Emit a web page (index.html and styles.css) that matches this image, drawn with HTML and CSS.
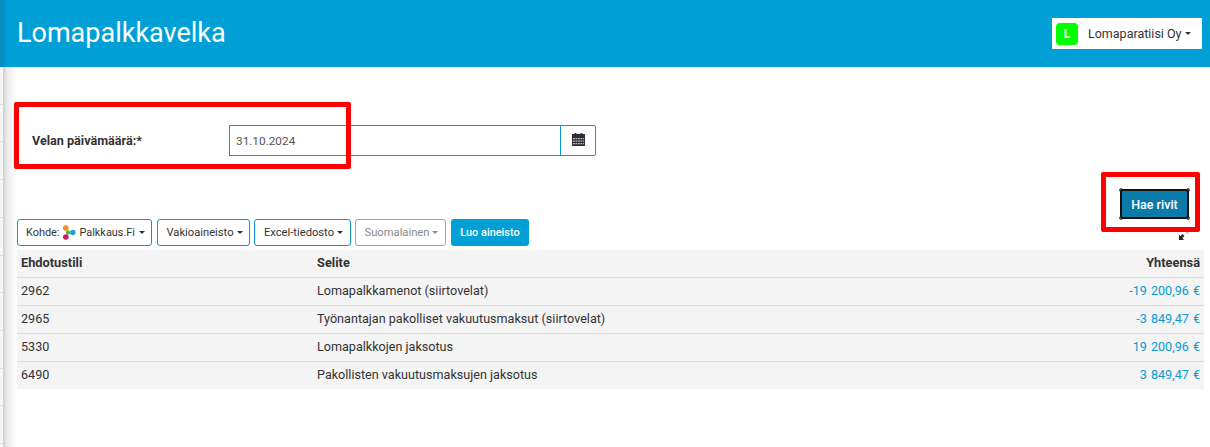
FILE: index.html
```html
<!DOCTYPE html>
<html lang="fi">
<head>
<meta charset="utf-8">
<title>Lomapalkkavelka</title>
<link rel="stylesheet" href="styles.css">
</head>
<body>
<div class="side-strip"></div>
<div class="side-shadow"></div>
<header class="topbar">
  <h1 class="title">Lomapalkkavelka</h1>
  <div class="company">
    <span class="company-badge">L</span>
    <span class="company-name">Lomaparatiisi Oy</span>
    <span class="caret caret-dark"></span>
  </div>
</header>
<main class="content">
  <div class="date-row">
    <label class="date-label">Velan päivämäärä:*</label>
    <div class="date-input">31.10.2024</div>
    <div class="date-btn">
      <svg width="13" height="13" viewBox="0 0 13 13"><path fill="#2f2f33" d="M0 1h2.500V0h2v1h4V0h2v1H13v13H0z"/><path fill="#b9bcc8" d="M1 5h1.800v1.300H1zM3.500 5h1.800v1.300H3.500zM6 5h1.800v1.300H6zM8.500 5h1.800v1.300H8.500zM11 5h1v1.300h-1zM1 7.500h1.800v1.300H1zM3.500 7.500h1.800v1.300H3.500zM6 7.500h1.800v1.300H6zM8.500 7.500h1.800v1.300H8.500zM11 7.500h1v1.300h-1zM1 10h1.800v1.300H1zM3.500 10h1.800v1.300H3.500zM6 10h1.800v1.300H6zM8.500 10h1.800v1.300H8.500zM11 10h1v1.300h-1z"/></svg>
    </div>
  </div>
  <div class="fetch-row">
    <div class="fetch-handles"><button class="fetch-btn">Hae rivit</button></div>
  </div>
  <div class="toolbar">
    <button class="tool w1">Kohde:
      <svg class="logo" width="14" height="15" viewBox="0 0 14 15"><circle cx="3.800" cy="3" r="2.800" fill="#f08c1e"/><circle cx="10.800" cy="7.500" r="2.700" fill="#1c9fd8"/><circle cx="6" cy="7.500" r="2.200" fill="#5cb531"/><circle cx="3.800" cy="12" r="2.800" fill="#c8186e"/></svg>
      Palkkaus.Fi<span class="caret"></span></button>
    <button class="tool w2">Vakioaineisto<span class="caret"></span></button>
    <button class="tool w3">Excel-tiedosto<span class="caret"></span></button>
    <button class="tool tool-off w4">Suomalainen<span class="caret"></span></button>
    <button class="tool-primary">Luo aineisto</button>
  </div>
  <div class="expand-row">
    <svg width="10" height="9" viewBox="0 0 10 9"><path fill="#2b2b2b" d="M0 9V3.500l1.500 1.500L3.500 3l2 2-2 2L5 9z"/><path fill="#999" d="M9.500 0v2.500L8.700 1.700 7.500 3 6.700 2.200 8 1 7.200 0z"/></svg>
  </div>
  <table class="grid">
    <thead>
      <tr><th class="c1">Ehdotustili</th><th class="c2">Selite</th><th class="num">Yhteensä</th></tr>
    </thead>
    <tbody>
      <tr><td>2962</td><td>Lomapalkkamenot (siirtovelat)</td><td class="num amount">-19 200,96 €</td></tr>
      <tr><td>2965</td><td>Työnantajan pakolliset vakuutusmaksut (siirtovelat)</td><td class="num amount">-3 849,47 €</td></tr>
      <tr><td>5330</td><td>Lomapalkkojen jaksotus</td><td class="num amount">19 200,96 €</td></tr>
      <tr><td>6490</td><td>Pakollisten vakuutusmaksujen jaksotus</td><td class="num amount">3 849,47 €</td></tr>
    </tbody>
  </table>
</main>
<div class="mark mark-date"></div>
<div class="mark mark-fetch"></div>
</body>
</html>
```
FILE: styles.css
```css
* { box-sizing: border-box; }
html, body { margin: 0; padding: 0; height: 100%; overflow: hidden; }
body { font-family: Roboto, "Liberation Sans", sans-serif; font-size: 13px; color: #333; background: #fff; }

.side-strip { position: absolute; left: 0; top: 67px; bottom: 0; width: 3px; background: repeating-linear-gradient(to bottom, #f6f6f6 0, #f6f6f6 36.7px, #dcdcdc 36.7px, #dcdcdc 37.7px); }
.side-shadow { position: absolute; left: 3px; top: 67px; bottom: 0; width: 14px; background: linear-gradient(to right, #cfcfcf, #ececec 30%, #fff); }

.topbar { height: 67px; background: linear-gradient(to right, #0a8cbe 0, #0a8cbe 3px, #009fd6 6px); display: flex; align-items: flex-start; justify-content: space-between; padding: 18px 8px 0 17px; }
.title { margin: 0; font-size: 27px; font-weight: 400; line-height: 30px; color: #fff; }
.company { width: 150px; height: 31px; background: #fff; display: flex; align-items: center; padding-left: 4px; font-size: 12.500px; color: #333; }
.company-badge { width: 22px; height: 22px; border-radius: 4px; background: #00ff00; color: #fff; font-weight: 700; font-size: 12px; display: flex; align-items: center; justify-content: center; margin-right: 10px; }
.caret { display: inline-block; width: 0; height: 0; margin-left: 3px; vertical-align: middle; border-top: 3px solid currentColor; border-left: 3px solid transparent; border-right: 3px solid transparent; }
.caret-dark { color: #333; }

.content { position: relative; padding: 58px 6px 0 17px; }

.date-row { display: flex; align-items: center; height: 31px; padding-left: 15px; }
.date-label { width: 197px; font-weight: 700; font-size: 12.600px; color: #333; }
.date-input { width: 332px; height: 31px; border: 1px solid #3a9358; display: flex; align-items: center; padding-left: 6px; font-size: 11.800px; color: #555; }
.date-btn { width: 36px; height: 31px; border: 1px solid #0a9ad2; border-radius: 0 2px 2px 0; display: flex; align-items: center; justify-content: center; margin-left: -1px; padding-bottom: 2px; }

.fetch-row { display: flex; justify-content: flex-end; padding: 32px 14px 0 0; height: 63px; }
.fetch-handles { width: 71px; height: 32px; padding: 1px; background:
  radial-gradient(circle at 2px 2px, #667 1.800px, transparent 2.200px),
  radial-gradient(circle at 69px 2px, #667 1.800px, transparent 2.200px),
  radial-gradient(circle at 2px 30px, #667 1.800px, transparent 2.200px),
  radial-gradient(circle at 69px 30px, #667 1.800px, transparent 2.200px); }
.fetch-btn { width: 69px; height: 30px; padding: 0; background: #0a7ba8; color: #fff; border: 2px solid #111; border-radius: 3px; font: 500 12.500px Roboto, sans-serif; }

.toolbar { display: flex; height: 27px; }
.tool { height: 27px; margin-right: 4px; padding: 0 0 0 2px; background: #fff; border: 1px solid #0a97cc; border-radius: 3px; font: 400 11.200px Roboto, sans-serif; color: #333; display: flex; align-items: center; justify-content: center; white-space: nowrap; }
.logo { margin: 0 3px; }
.w1 { width: 135px; margin-right: 5px; font-size: 10.900px; }
.w1 .caret { margin-left: 4px; }
.w2 { width: 93px; }
.w3 { width: 97px; }
.w4 { width: 91px; margin-right: 5px; border-color: #66b9da; color: #888; }
.tool-primary { width: 78px; height: 27px; padding: 0; background: #009fd6; color: #fff; border: 0; border-radius: 3px; font: 500 10.900px Roboto, sans-serif; }

.expand-row { position: absolute; right: 21px; top: 164px; line-height: 0; }

.grid { width: 1187px; margin-top: 4px; border-collapse: separate; border-spacing: 0; table-layout: fixed; font-size: 12.600px; color: #333; background: #f4f4f4; }
.grid th { height: 28px; padding: 0 4px 2px; text-align: left; font-weight: 700; font-size: 12.800px; border-bottom: 1px solid #ddd; }
.grid td { height: 28px; padding: 0 4px 2px; border-bottom: 1px solid #ddd; }
.grid tbody tr:last-child td { border-bottom: 0; height: 27px; }
.c1 { width: 296px; }
.c2 { width: 300px; }
.grid .num { text-align: right; }
.grid .amount { color: #0a9ad2; word-spacing: 1px; }

.mark { position: absolute; border: 5px solid #f00; border-radius: 2px; pointer-events: none; }
.mark-date { left: 14px; top: 102px; width: 337px; height: 67px; }
.mark-fetch { left: 1101px; top: 172px; width: 99px; height: 60px; }
```
